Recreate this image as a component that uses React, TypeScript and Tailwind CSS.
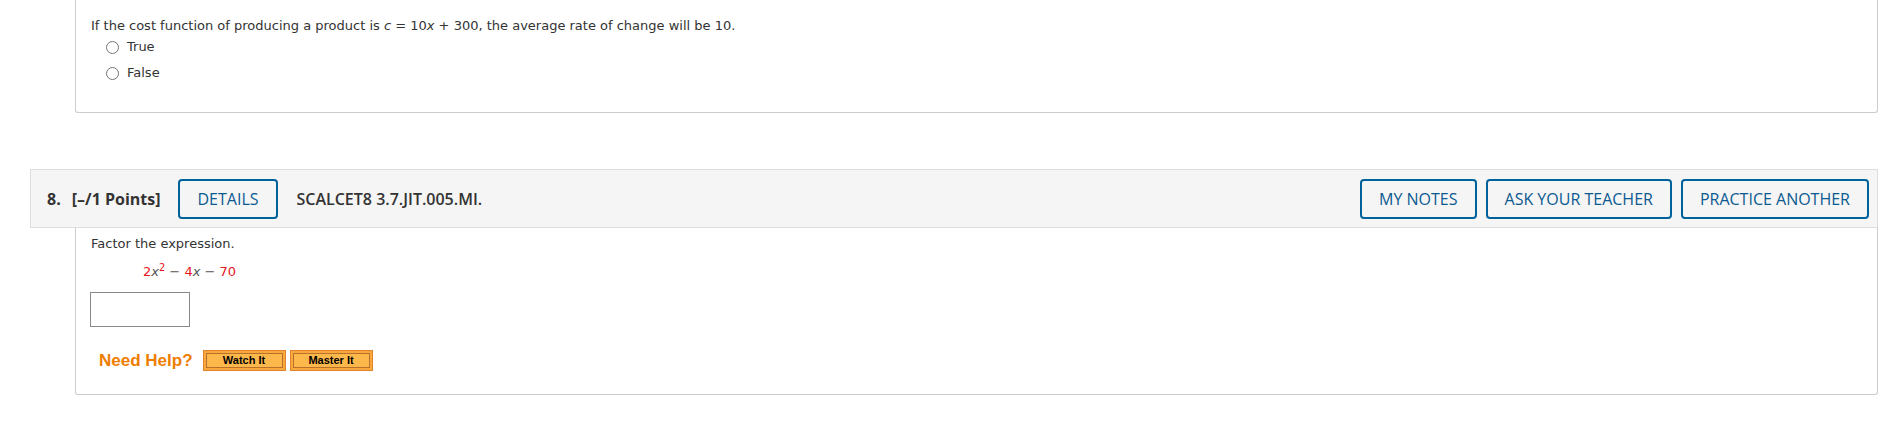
import React from "react";

const verdana = "font-['Verdana','DejaVu_Sans',sans-serif]";
const openSans = "font-['Open_Sans',sans-serif]";

function Radio({ label }: { label: string }) {
  return (
    <label className="flex h-[26px] items-center">
      <span className="ml-[15px] h-[13px] w-[13px] rounded-full border border-[#767676] bg-white" />
      <span className="ml-[8px] text-[13px] text-[#333]">{label}</span>
    </label>
  );
}

function BlueButton({ children }: { children: React.ReactNode }) {
  return (
    <button
      className={`flex h-[40px] items-center rounded-[4px] border-2 border-[#00629b] bg-[#f5f5f5] px-[17px] text-[16px] font-normal text-[#0b5a91] ${openSans}`}
    >
      {children}
    </button>
  );
}

function HelpButton({ children }: { children: React.ReactNode }) {
  return (
    <button className="h-[21px] w-[83px] border border-[#e0832a] bg-[#f9a83d] p-[2px]">
      <span className="flex h-full w-full items-center justify-center border border-[#b8702a] bg-[#fdb84c] font-['Liberation_Sans',Arial,sans-serif] text-[11px] font-bold leading-none text-black">
        {children}
      </span>
    </button>
  );
}

export default function App() {
  return (
    <div className={`h-[439px] w-[1887px] overflow-hidden bg-white ${verdana}`}>
      {/* previous question, top clipped */}
      <div className="ml-[75px] h-[113px] w-[1803px] rounded-b-[3px] border-x border-b border-[#cccccc] pl-[15px] pt-[18px]">
        <p className="text-[13px] leading-[16px] text-[#333]">
          If the cost function of producing a product is <i>c</i> = 10<i>x</i> + 300, the average rate of change
          will be 10.
        </p>
        <Radio label="True" />
        <Radio label="False" />
      </div>

      {/* question 8 */}
      <div className="ml-[30px] mt-[56px] w-[1848px]">
        <div className="flex h-[59px] items-center border border-[#dddddd] bg-[#f5f5f5] pl-[16px] pr-[8px]">
          <span className={`text-[16px] font-bold text-[#333] ${openSans}`}>8.</span>
          <span className={`ml-[11px] text-[16px] font-bold text-[#333] ${openSans}`}>[–/1 Points]</span>
          <div className="ml-[18px]">
            <BlueButton>DETAILS</BlueButton>
          </div>
          <span className={`ml-[19px] text-[16px] font-semibold text-[#333] ${openSans}`}>
            SCALCET8 3.7.JIT.005.MI.
          </span>
          <div className="ml-auto flex gap-[9px]">
            <BlueButton>MY NOTES</BlueButton>
            <BlueButton>ASK YOUR TEACHER</BlueButton>
            <BlueButton>PRACTICE ANOTHER</BlueButton>
          </div>
        </div>

        <div className="ml-[45px] h-[167px] rounded-b-[3px] border-x border-b border-[#cccccc] pl-[15px] pt-[8px]">
          <p className="text-[13px] leading-[16px] text-[#333]">Factor the expression.</p>
          <p className="ml-[52px] mt-[12px] text-[13px] leading-[16px] text-[#555]">
            <span className="text-[#e8141c]">2</span>
            <i>x</i>
            <sup className="text-[#e8141c]">2</sup> − <span className="text-[#e8141c]">4</span>
            <i>x</i> − <span className="text-[#e8141c]">70</span>
          </p>
          <div className="-ml-px mt-[12px] h-[35px] w-[100px] border border-[#888888] bg-white" />
          <div className="mt-[21px] flex items-center">
            <span className="ml-[8px] font-['Liberation_Sans',Arial,sans-serif] text-[17px] font-bold text-[#ee7d00]">
              Need Help?
            </span>
            <div className="ml-[10px] flex gap-[4px]">
              <HelpButton>Watch It</HelpButton>
              <HelpButton>Master It</HelpButton>
            </div>
          </div>
        </div>
      </div>
    </div>
  );
}
